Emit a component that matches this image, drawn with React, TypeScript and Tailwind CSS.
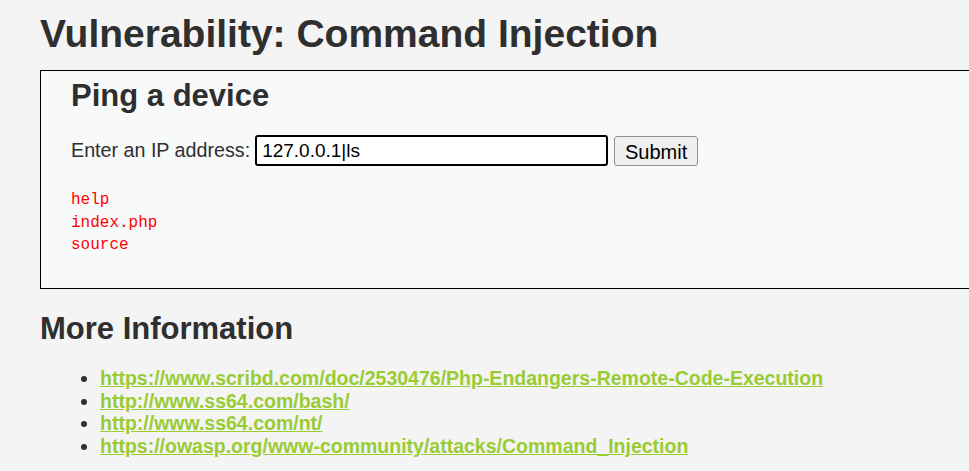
import React from "react";

const links = [
  "https://www.scribd.com/doc/2530476/Php-Endangers-Remote-Code-Execution",
  "http://www.ss64.com/bash/",
  "http://www.ss64.com/nt/",
  "https://owasp.org/www-community/attacks/Command_Injection",
];

const App = () => {
  return (
    <div className="w-[969px] h-[471px] overflow-hidden bg-[#f4f4f4] text-[#2f2f2f] font-['Liberation_Sans',Arial,sans-serif]">
      <div className="pl-[40px] w-[1100px]">
        <h1 className="pt-[11px] text-[39px] leading-[46px] font-bold">Vulnerability: Command Injection</h1>

        {/* main box */}
        <div className="mt-[13px] border border-black bg-[#f8f9f9] pl-[30px] pt-[7px] h-[219px]">
          <h2 className="text-[31px] leading-[36px] font-bold">Ping a device</h2>
          <form className="mt-[21px] flex items-center text-[19.7px]" onSubmit={(e) => e.preventDefault()}>
            <span>Enter an IP address:</span>
            <input
              defaultValue="127.0.0.1|ls"
              className="ml-[5px] w-[353px] h-[31px] px-[5px] border-2 border-black rounded-[3px] bg-white text-[19px] text-black outline-none"
            />
            <button className="ml-[6px] h-[30px] w-[84px] bg-[#efefef] border border-[#8f8f8f] rounded-[3px] text-[20px] text-black">
              Submit
            </button>
          </form>
          <pre className="mt-[23px] text-[16px] leading-[22.5px] text-[#ff0000] font-['Liberation_Mono',monospace]">
            {"help\nindex.php\nsource"}
          </pre>
        </div>

        <h2 className="mt-[22px] text-[31px] leading-[36px] font-bold">More Information</h2>
        <ul className="mt-[20px] pl-[60px] list-disc text-[19.5px] leading-[22.67px] font-bold">
          {links.map((l) => (
            <li key={l}>
              <a href={l} className="text-[#99cc33] underline">
                {l}
              </a>
            </li>
          ))}
        </ul>
      </div>
    </div>
  );
};

export default App;
